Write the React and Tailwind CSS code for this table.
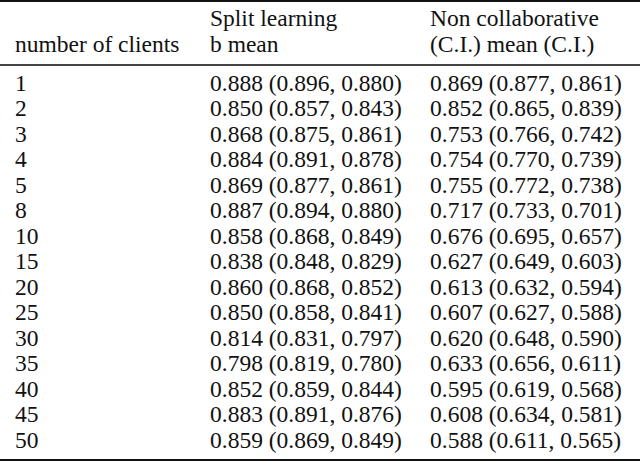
import React from 'react';

const rows = [
  ['1', '0.888 (0.896, 0.880)', '0.869 (0.877, 0.861)'],
  ['2', '0.850 (0.857, 0.843)', '0.852 (0.865, 0.839)'],
  ['3', '0.868 (0.875, 0.861)', '0.753 (0.766, 0.742)'],
  ['4', '0.884 (0.891, 0.878)', '0.754 (0.770, 0.739)'],
  ['5', '0.869 (0.877, 0.861)', '0.755 (0.772, 0.738)'],
  ['8', '0.887 (0.894, 0.880)', '0.717 (0.733, 0.701)'],
  ['10', '0.858 (0.868, 0.849)', '0.676 (0.695, 0.657)'],
  ['15', '0.838 (0.848, 0.829)', '0.627 (0.649, 0.603)'],
  ['20', '0.860 (0.868, 0.852)', '0.613 (0.632, 0.594)'],
  ['25', '0.850 (0.858, 0.841)', '0.607 (0.627, 0.588)'],
  ['30', '0.814 (0.831, 0.797)', '0.620 (0.648, 0.590)'],
  ['35', '0.798 (0.819, 0.780)', '0.633 (0.656, 0.611)'],
  ['40', '0.852 (0.859, 0.844)', '0.595 (0.619, 0.568)'],
  ['45', '0.883 (0.891, 0.876)', '0.608 (0.634, 0.581)'],
  ['50', '0.859 (0.869, 0.849)', '0.588 (0.611, 0.565)'],
];

const Row = ({ cells }) => (
  <div className="grid grid-cols-[210px_220px_1fr]">
    <div className="pl-[15px]">{cells[0]}</div>
    <div>{cells[1]}</div>
    <div>{cells[2]}</div>
  </div>
);

export default function App() {
  return (
    <div className="w-[640px] h-[467px] bg-white text-[#111] font-[family-name:Liberation_Serif,serif] text-[23.5px] leading-[25.5px] overflow-hidden">
      {/* top rule */}
      <div className="h-[2px] bg-[#111]" />

      {/* header */}
      <div className="grid grid-cols-[210px_220px_1fr] pt-[4px] pb-[7px]">
        <div className="pl-[15px] flex items-end">number of clients</div>
        <div>
          <div>Split learning</div>
          <div>b mean</div>
        </div>
        <div>
          <div>Non collaborative</div>
          <div>(C.I.) mean (C.I.)</div>
        </div>
      </div>

      {/* mid rule */}
      <div className="h-[1.5px] bg-[#444]" />

      {/* body */}
      <div className="pt-[5px] pb-[6px]">
        {rows.map((r) => (
          <Row key={r[0]} cells={r} />
        ))}
      </div>

      {/* bottom rule */}
      <div className="h-[2px] bg-[#111]" />
    </div>
  );
}
